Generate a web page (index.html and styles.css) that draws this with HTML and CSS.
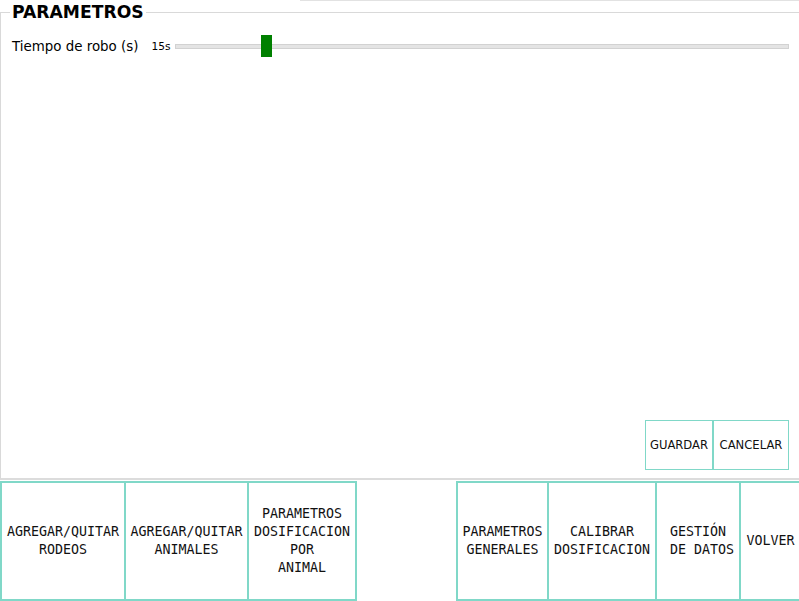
FILE: index.html
```html
<!DOCTYPE html>
<html lang="es">
<head>
<meta charset="utf-8">
<title>Parametros</title>
<link rel="stylesheet" href="styles.css">
</head>
<body>
<div class="screen">
  <div class="panel">
    <div class="topline"></div>
    <fieldset class="group">
      <legend class="title">PARAMETROS</legend>
      <div class="group-body">
        <div class="row">
          <span class="label">Tiempo de robo (s)</span>
          <span class="value">15s</span>
          <div class="slider">
            <div class="track"></div>
            <div class="handle" style="left:86px"></div>
          </div>
        </div>
        <div class="actions">
          <button class="btn-sm btn-guardar">GUARDAR</button><button class="btn-sm btn-cancelar">CANCELAR</button>
        </div>
      </div>
    </fieldset>
  </div>
  <div class="toolbar">
    <div class="tb-group">
      <button class="tb-btn w1">AGREGAR/QUITAR<br>RODEOS</button>
      <button class="tb-btn w2">AGREGAR/QUITAR<br>ANIMALES</button>
      <button class="tb-btn w3">PARAMETROS<br>DOSIFICACION<br>POR<br>ANIMAL</button>
    </div>
    <div class="tb-group tb-right">
      <button class="tb-btn w4">PARAMETROS<br>GENERALES</button>
      <button class="tb-btn w5">CALIBRAR<br>DOSIFICACION</button>
      <button class="tb-btn w6 pre"> GESTIÓN <br> DE DATOS</button>
      <button class="tb-btn w7">VOLVER</button>
    </div>
  </div>
</div>
</body>
</html>
```
FILE: styles.css
```css
html, body {
  margin: 0;
  padding: 0;
  background: #ffffff;
}
body {
  width: 799px;
  height: 601px;
  overflow: hidden;
}
.screen {
  width: 799px;
  height: 601px;
  display: flex;
  flex-direction: column;
  overflow: hidden;
}
.panel {
  height: 480px;
  flex: none;
}
.topline {
  height: 1px;
  margin-left: 300px;
  background: #e2e2e2;
}
.group {
  box-sizing: border-box;
  margin: 1px 0 0 0;
  min-width: 0;
  width: 799px;
  height: 478px;
  border: none;
  border-top: 1px solid #d9d9d9;
  border-left: 1px solid #d9d9d9;
  border-bottom: 2px solid #dcdcdc;
  padding: 0 10px 8px 9px;
}
.title {
  padding: 0 2px;
  font-family: "DejaVu Sans", sans-serif;
  font-weight: bold;
  font-size: 17.2px;
  line-height: 20px;
  color: #000;
}
.group-body {
  height: 448px;
  display: flex;
  flex-direction: column;
}
.row {
  margin-top: 13px;
  height: 22px;
  display: flex;
  align-items: center;
}
.label {
  margin-left: 2px;
  font-family: "DejaVu Sans", sans-serif;
  font-size: 13.4px;
  color: #000;
}
.value {
  margin-left: 13px;
  font-family: "DejaVu Sans", sans-serif;
  font-size: 10.6px;
  color: #000;
}
.slider {
  position: relative;
  flex: 1;
  height: 22px;
  margin-left: 4px;
  display: flex;
  align-items: center;
}
.track {
  box-sizing: border-box;
  width: 100%;
  height: 5px;
  background: #e4e4e4;
  border: 1px solid #d2d2d2;
}
.handle {
  position: absolute;
  top: 0;
  width: 11px;
  height: 22px;
  background: #008000;
}
.actions {
  margin-top: auto;
  display: flex;
  justify-content: flex-end;
}
.btn-sm {
  box-sizing: border-box;
  height: 50px;
  margin: 0;
  padding: 0;
  background: #fff;
  border: 1px solid #80d8c8;
  font-family: "DejaVu Sans", sans-serif;
  font-size: 11.6px;
  color: #111;
}
.btn-guardar { width: 68px; }
.btn-cancelar { width: 76px; }
.toolbar {
  padding-top: 1px;
  display: flex;
  height: 120px;
  flex: none;
}
.tb-group {
  display: flex;
}
.tb-right {
  margin-left: 99px;
}
.tb-btn {
  box-sizing: border-box;
  height: 120px;
  margin: 0 0 0 -2px;
  padding: 0;
  background: #fff;
  border: 2px solid #80d8c8;
  font-family: "DejaVu Sans Mono", monospace;
  font-size: 13.3px;
  line-height: 18px;
  color: #111;
  text-align: center;
  flex-shrink: 0;
}
.tb-group .tb-btn:first-child {
  margin-left: 0;
}
.pre { white-space: pre; }
.w1 { width: 126px; }
.w2 { width: 125px; }
.w3 { width: 110px; }
.w4 { width: 93px; }
.w5 { width: 110px; }
.w6 { width: 86px; }
.w7 { width: 63px; }
```
